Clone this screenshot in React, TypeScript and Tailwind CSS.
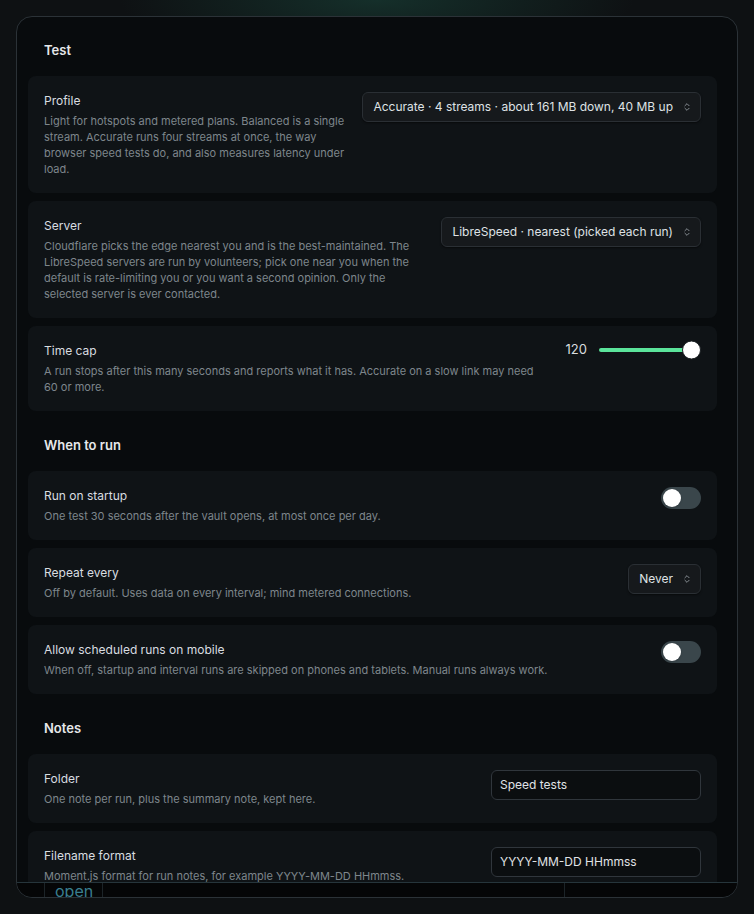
import { ChevronsUpDown } from "lucide-react";

type Row = {
    title: string;
    desc: string;
    control: React.ReactNode;
};

function Select({ value }: { value: string }) {
    return (
        <div className="flex h-[30px] shrink-0 items-center gap-[9px] rounded-md border border-[#2a2f34] bg-[#16191c] pl-2.5 pr-2 text-[12px] text-[#dfe2e5] shadow-[0_1px_2px_rgba(0,0,0,0.5)]">
            <span className="whitespace-nowrap">{value}</span>
            <ChevronsUpDown size={10} strokeWidth={2} className="text-[#9aa1a7]" />
        </div>
    );
}

function Toggle() {
    return (
        <div className="flex h-[22px] w-10 shrink-0 items-center rounded-full bg-[#3a464b] px-[2px]">
            <div className="h-[18px] w-[18px] rounded-full bg-white shadow" />
        </div>
    );
}

function TextInput({ value }: { value: string }) {
    return (
        <div className="flex h-[30px] w-[210px] shrink-0 items-center rounded-md border border-[#30363c] bg-[#0b0e10] px-2 text-[12px] text-[#e0e3e6]">
            {value}
        </div>
    );
}

function Slider() {
    return (
        <div className="flex h-4 shrink-0 items-center gap-3">
            <span className="text-[13px] text-[#d8dcdf]">120</span>
            <div className="relative flex h-4 w-[102px] items-center">
                <div className="h-1 w-[92px] rounded-full bg-[#5be49b]" />
                <div className="absolute right-0 top-1/2 h-[19px] w-[19px] -translate-y-1/2 rounded-full border border-[#1a1f22] bg-white" />
            </div>
        </div>
    );
}

function Card({ title, desc, control }: Row) {
    return (
        <div className="flex items-start gap-4 rounded-lg bg-[#0f1316] p-4">
            <div className="min-w-0 flex-1">
                <div className="text-[12px] leading-[18px] text-[#d9dde0]">{title}</div>
                <p className="mt-[3px] text-[11px] leading-4 text-[#7e868c]">{desc}</p>
            </div>
            {control}
        </div>
    );
}

function Section({ heading, rows, first }: { heading: string; rows: Row[]; first?: boolean }) {
    return (
        <div>
            <h2
                className={
                    first
                        ? "px-4 pb-4 pt-[23px] text-[13px] font-semibold leading-5 text-[#e6e8ea]"
                        : "px-4 pb-4 pt-6 text-[13px] font-semibold leading-5 text-[#e6e8ea]"
                }
            >
                {heading}
            </h2>
            <div className="flex flex-col gap-2">
                {rows.map((r) => (
                    <Card key={r.title} {...r} />
                ))}
            </div>
        </div>
    );
}

const sections: { heading: string; rows: Row[] }[] = [
    {
        heading: "Test",
        rows: [
            {
                title: "Profile",
                desc: "Light for hotspots and metered plans. Balanced is a single stream. Accurate runs four streams at once, the way browser speed tests do, and also measures latency under load.",
                control: <Select value="Accurate · 4 streams · about 161 MB down, 40 MB up" />,
            },
            {
                title: "Server",
                desc: "Cloudflare picks the edge nearest you and is the best-maintained. The LibreSpeed servers are run by volunteers; pick one near you when the default is rate-limiting you or you want a second opinion. Only the selected server is ever contacted.",
                control: <Select value="LibreSpeed · nearest (picked each run)" />,
            },
            {
                title: "Time cap",
                desc: "A run stops after this many seconds and reports what it has. Accurate on a slow link may need 60 or more.",
                control: <Slider />,
            },
        ],
    },
    {
        heading: "When to run",
        rows: [
            {
                title: "Run on startup",
                desc: "One test 30 seconds after the vault opens, at most once per day.",
                control: <Toggle />,
            },
            {
                title: "Repeat every",
                desc: "Off by default. Uses data on every interval; mind metered connections.",
                control: <Select value="Never" />,
            },
            {
                title: "Allow scheduled runs on mobile",
                desc: "When off, startup and interval runs are skipped on phones and tablets. Manual runs always work.",
                control: <Toggle />,
            },
        ],
    },
    {
        heading: "Notes",
        rows: [
            {
                title: "Folder",
                desc: "One note per run, plus the summary note, kept here.",
                control: <TextInput value="Speed tests" />,
            },
            {
                title: "Filename format",
                desc: "Moment.js format for run notes, for example YYYY-MM-DD HHmmss.",
                control: <TextInput value="YYYY-MM-DD HHmmss" />,
            },
        ],
    },
];

export default function App() {
    return (
        <div className="relative h-[914px] overflow-hidden bg-[#0e1113] pt-4 font-['Inter',sans-serif]">
            {/* teal haze behind the top edge */}
            <div className="pointer-events-none absolute left-1/2 top-0 h-[60px] w-[520px] -translate-x-1/2 bg-[radial-gradient(ellipse_at_top,rgba(34,104,86,0.35),transparent_70%)]" />

            <div className="relative mx-4 flex h-[882px] flex-col overflow-hidden rounded-2xl border border-[#2b3237] bg-[#080b0d]">
                <div className="min-h-0 flex-1 overflow-hidden pl-[11px] pr-5">
                    {sections.map((s, i) => (
                        <Section key={s.heading} heading={s.heading} rows={s.rows} first={i === 0} />
                    ))}
                </div>

                {/* table behind, peeking under the panel */}
                <div className="h-[15px] shrink-0 overflow-hidden border-t border-[#26353b] bg-[#050607]">
                    <div className="-mt-[2px] ml-[27px] flex h-[30px] text-[16px] leading-5">
                        <div className="w-[59px] border-x border-[#1c2428] pl-[10px] text-[#397f90]">open</div>
                        <div className="w-[462px] border-r border-[#1c2428]" />
                    </div>
                </div>
            </div>
        </div>
    );
}
